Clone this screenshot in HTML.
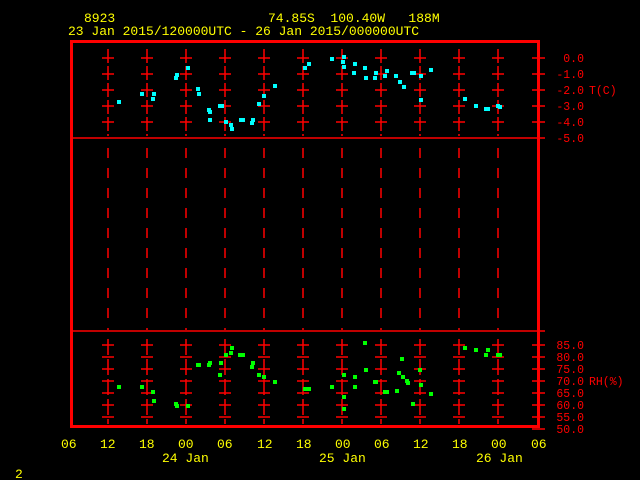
<!DOCTYPE html>
<html><head><meta charset="utf-8"><style>
html,body{margin:0;padding:0;background:#000;width:640px;height:480px;overflow:hidden}
svg{display:block}
text{font-family:"Liberation Mono",monospace;font-size:13px}
.y{fill:#ffff00}.r{fill:#ff0000}
.r text{font-size:11.5px}
</style></head><body>
<svg id="s" width="640" height="480" xmlns="http://www.w3.org/2000/svg">
<rect width="640" height="480" fill="#000"/>
<text class="y" x="84" y="22">8923</text>
<text class="y" x="268" y="22" xml:space="preserve">74.85S  100.40W   188M</text>
<text class="y" x="68" y="35">23 Jan 2015/120000UTC - 26 Jan 2015/000000UTC</text>
<g id="g"></g>
<rect x="71.5" y="41.5" width="467" height="385" fill="none" stroke="#ff0000" stroke-width="3"/>
<line x1="70" y1="138" x2="545" y2="138" stroke="#ff0000" stroke-width="1.5"/>
<line x1="70" y1="331" x2="545" y2="331" stroke="#ff0000" stroke-width="1.5"/>
<g class="r" text-anchor="end">
<text x="584" y="62">0.0</text>
<text x="584" y="78">-1.0</text>
<text x="584" y="94">-2.0</text>
<text x="584" y="110">-3.0</text>
<text x="584" y="126">-4.0</text>
<text x="584" y="142">-5.0</text>
<text x="584" y="349">85.0</text>
<text x="584" y="361">80.0</text>
<text x="584" y="373">75.0</text>
<text x="584" y="385">70.0</text>
<text x="584" y="397">65.0</text>
<text x="584" y="409">60.0</text>
<text x="584" y="421">55.0</text>
<text x="584" y="433">50.0</text>
</g>
<g class="r">
<text x="589" y="94">T(C)</text>
<text x="589" y="385">RH(%)</text>
</g>
<g class="y">
<text x="61" y="448">06</text><text x="100" y="448">12</text><text x="139" y="448">18</text>
<text x="178" y="448">00</text><text x="217" y="448">06</text><text x="257" y="448">12</text>
<text x="296" y="448">18</text><text x="335" y="448">00</text><text x="374" y="448">06</text>
<text x="413" y="448">12</text><text x="452" y="448">18</text><text x="491" y="448">00</text>
<text x="531" y="448">06</text>
<text x="162" y="462">24 Jan</text><text x="319" y="462">25 Jan</text><text x="476" y="462">26 Jan</text>
<text x="15" y="478">2</text>
</g>
</svg>
<script>
var g=document.getElementById('g'),h='';
var cols=[108,147,186,225,264,303,342,381,420,459,498];
function L(x1,y1,x2,y2,extra){h+='<line x1="'+x1+'" y1="'+y1+'" x2="'+x2+'" y2="'+y2+'" stroke="#ff0000" stroke-width="1.5" '+(extra||'')+'/>';}
cols.forEach(function(x){
 L(x,49,x,136,'stroke-dasharray="14,3"');
 L(x,148,x,330,'stroke-dasharray="10,10"');
 L(x,339,x,424,'stroke-dasharray="16,4"');
 [58,74,90,106,122].forEach(function(y){L(x-6,y,x+6,y);});
 [345,357,369,381,393,405,417].forEach(function(y){L(x-6,y,x+6,y);});
});
[58,74,90,106,122].forEach(function(y){L(532,y,545,y);});
[345,357,369,381,393,405,417,429].forEach(function(y){L(532,y,545,y);});
var T=[[119,102],[142,94],[154,94],[153,99],[176,78],[177,75],[188,68],[198,89],[199,94],[209,110],[210,112],[210,120],[220,106],[222,106],[226,122],[231,125],[232,129],[241,120],[243,120],[252,123],[253,120],[259,104],[264,96],[275,86],[305,68],[309,64],[332,59],[344,57],[343,62],[344,67],[355,64],[354,73],[365,68],[376,73],[366,78],[375,78],[385,76],[387,71],[396,76],[400,82],[404,87],[412,73],[414,73],[421,76],[421,100],[431,70],[465,99],[476,106],[486,109],[488,109],[498,106],[500,107]];
var R=[[119,387],[142,387],[153,392],[154,401],[176,404],[177,406],[188,406],[198,365],[199,365],[209,365],[210,363],[221,363],[220,375],[226,355],[231,353],[232,348],[240,355],[243,355],[252,367],[253,363],[259,375],[264,377],[275,382],[305,389],[309,389],[332,387],[344,375],[344,397],[344,409],[355,377],[355,387],[365,343],[366,370],[375,382],[376,382],[385,392],[387,392],[397,391],[399,373],[402,359],[403,377],[407,381],[408,383],[413,404],[420,370],[421,385],[431,394],[465,348],[476,350],[488,350],[486,355],[498,355],[500,355]];
T.forEach(function(p){h+='<rect x="'+(p[0]-2)+'" y="'+(p[1]-2)+'" width="4" height="4" fill="#00ffff"/>';});
R.forEach(function(p){h+='<rect x="'+(p[0]-2)+'" y="'+(p[1]-2)+'" width="4" height="4" fill="#00ff00"/>';});
g.innerHTML=h;
</script>
</body></html>
